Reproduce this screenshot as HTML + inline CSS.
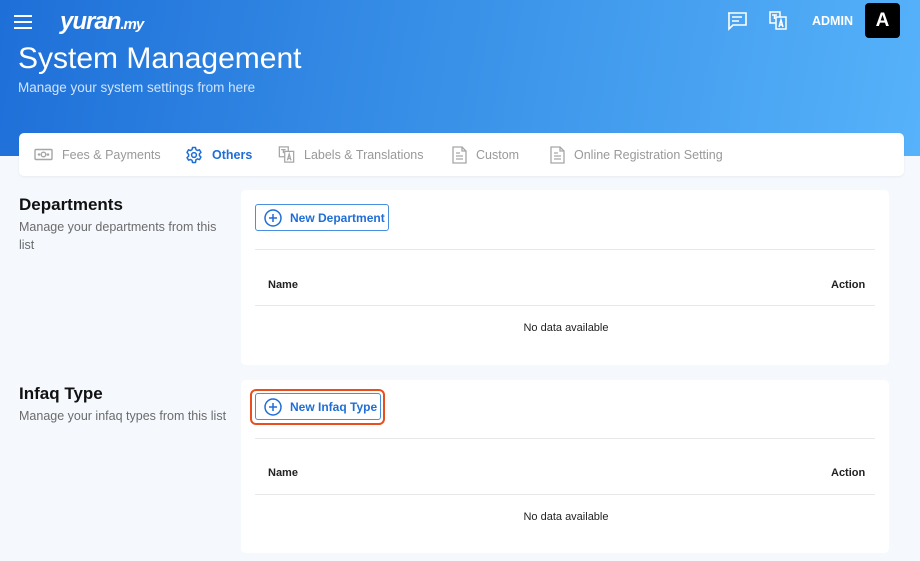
<!DOCTYPE html>
<html><head><style>
*{margin:0;padding:0;box-sizing:border-box}
body{width:920px;height:561px;overflow:hidden;background:#f5f9fe;font-family:"Liberation Sans",Arial,sans-serif;position:relative}
.hdr{position:absolute;left:0;top:0;width:920px;height:156px;background:linear-gradient(100deg,#1e6fd8 0%,#3a92e8 50%,#56b2fa 100%)}
.abs{position:absolute;white-space:nowrap}
.tabs{position:absolute;left:19px;top:133px;width:885px;height:43px;background:#fff;border-radius:5px;box-shadow:0 1px 2px rgba(0,0,0,.06)}
.tab{position:absolute;top:0;height:43px;display:flex;align-items:center;font-size:12.5px;color:#999;white-space:nowrap}
.tab svg{margin-right:9px}
.card{position:absolute;left:241px;width:648px;background:#fff;border-radius:5px}
.btn{position:absolute;left:14px;height:27px;border:1px solid #4a8ee0;border-radius:3px;color:#1f6ed6;font-size:12px;font-weight:bold;display:flex;align-items:center;padding-left:8px;white-space:nowrap}
.btn svg{margin-right:8px}
.line{position:absolute;left:14px;right:14px;height:1px;background:#e8e8e8}
.th{position:absolute;font-size:11px;font-weight:bold;color:#222}
.nd{position:absolute;left:0;width:650px;text-align:center;font-size:11px;color:#222}
h2{position:absolute;left:19px;font-size:17px;color:#111;font-weight:bold}
.sub{position:absolute;left:19px;font-size:12.5px;color:#6b6b6b;line-height:18px;width:210px}
</style></head><body>
<div class="hdr"></div>
<div class="abs" style="left:14px;top:15px;width:18px">
<div style="height:2px;background:#fff;margin-bottom:4px"></div><div style="height:2px;background:#fff;margin-bottom:4px"></div><div style="height:2px;background:#fff"></div></div>
<div class="abs" style="left:60px;top:8px;color:#fff;font-size:24px;font-weight:bold;font-style:italic;letter-spacing:-1px">yuran<span style="font-size:15px">.my</span></div>
<div class="abs" style="left:18px;top:42px;color:#fff;font-size:30px">System Management</div>
<div class="abs" style="left:18px;top:80px;color:#cfe4fb;font-size:13.5px">Manage your system settings from here</div>
<svg class="abs" style="left:727px;top:12px" width="20" height="19" viewBox="0 0 20 19" fill="none" stroke="#fff" stroke-width="1.6"><path d="M1 1h18v12H6l-4 4V1z"/><path d="M5 5h10M5 9h7"/></svg>
<svg class="abs" style="left:769px;top:11px" width="18" height="19" viewBox="0 0 18 19" fill="none" stroke="#fff" stroke-width="1.5"><rect x="1" y="1" width="10" height="11"/><rect x="7" y="6" width="10" height="12" fill="#4aa3f2"/><path d="M10 16l2-7 2 7M10.7 14h2.6M3 4h5M5.5 4v4"/></svg>
<div class="abs" style="left:812px;top:14px;color:#fff;font-size:12.5px;font-weight:bold">ADMIN</div>
<div class="abs" style="left:865px;top:3px;width:35px;height:35px;background:#000;border-radius:4px;color:#fff;font-size:19px;font-weight:bold;text-align:center;line-height:35px">A</div>

<div class="tabs">
<div class="tab" style="left:15px"><svg width="19" height="13" viewBox="0 0 19 13" fill="none" stroke="#a6a6a6" stroke-width="1.4"><rect x="1" y="1.5" width="17" height="10" rx="1"/><circle cx="9.5" cy="6.5" r="2.3"/><circle cx="5" cy="6.5" r=".6"/><circle cx="14" cy="6.5" r=".6"/></svg>Fees &amp; Payments</div>
<div class="tab" style="left:166px;color:#1f6ed6;font-weight:bold"><svg width="18" height="18" viewBox="0 0 24 24" fill="none" stroke="#1f6ed6" stroke-width="2" stroke-linejoin="round"><circle cx="12" cy="12" r="3.2"/><path d="M10 2h4l.6 2.8 2 1.2 2.7-.9 2 3.4-2.1 1.9v2.4l2.1 1.9-2 3.4-2.7-.9-2 1.2L14 22h-4l-.6-2.8-2-1.2-2.7.9-2-3.4 2.1-1.9v-2.4L2.7 8.5l2-3.4 2.7.9 2-1.2z"/></svg>Others</div>
<div class="tab" style="left:259px"><svg width="17" height="17" viewBox="0 0 18 19" fill="none" stroke="#a6a6a6" stroke-width="1.4"><rect x="1" y="1" width="10" height="11"/><rect x="7" y="6" width="10" height="12" fill="#fff"/><path d="M10 16l2-7 2 7M10.7 14h2.6M3 4h5M5.5 4v4"/></svg>Labels &amp; Translations</div>
<div class="tab" style="left:433px"><svg width="15" height="18" viewBox="0 0 15 18" fill="none" stroke="#a6a6a6" stroke-width="1.3"><path d="M1 1h9l4 4v12H1z"/><path d="M10 1v4h4M4 10h7M4 13h7M4 7h4"/></svg>Custom</div>
<div class="tab" style="left:531px"><svg width="15" height="18" viewBox="0 0 15 18" fill="none" stroke="#a6a6a6" stroke-width="1.3"><path d="M1 1h9l4 4v12H1z"/><path d="M10 1v4h4M4 10h7M4 13h7M4 7h4"/></svg>Online Registration Setting</div>
</div>

<h2 style="top:195px">Departments</h2>
<div class="sub" style="top:218px">Manage your departments from this list</div>
<div class="card" style="top:190px;height:175px">
<div class="btn" style="top:14px;width:134px"><svg width="18" height="18" viewBox="0 0 18 18" fill="none" stroke="#1f6ed6" stroke-width="1.5"><circle cx="9" cy="9" r="8"/><path d="M9 5v8M5 9h8"/></svg>New Department</div>
<div class="line" style="top:59px"></div>
<div class="th" style="left:27px;top:89px">Name</div><div class="th" style="left:590px;top:89px">Action</div>
<div class="line" style="top:115px"></div>
<div class="nd" style="top:132px">No data available</div>
</div>

<h2 style="top:384px">Infaq Type</h2>
<div class="sub" style="top:407px">Manage your infaq types from this list</div>
<div class="card" style="top:380px;height:173px">
<div class="abs" style="left:9px;top:9px;width:135px;height:36px;border:2.5px solid #ea4e1c;border-radius:6px"></div>
<div class="btn" style="top:13px;width:126px"><svg width="18" height="18" viewBox="0 0 18 18" fill="none" stroke="#1f6ed6" stroke-width="1.5"><circle cx="9" cy="9" r="8"/><path d="M9 5v8M5 9h8"/></svg>New Infaq Type</div>
<div class="line" style="top:58px"></div>
<div class="th" style="left:27px;top:87px">Name</div><div class="th" style="left:590px;top:87px">Action</div>
<div class="line" style="top:114px"></div>
<div class="nd" style="top:131px">No data available</div>
</div>
</body></html>
